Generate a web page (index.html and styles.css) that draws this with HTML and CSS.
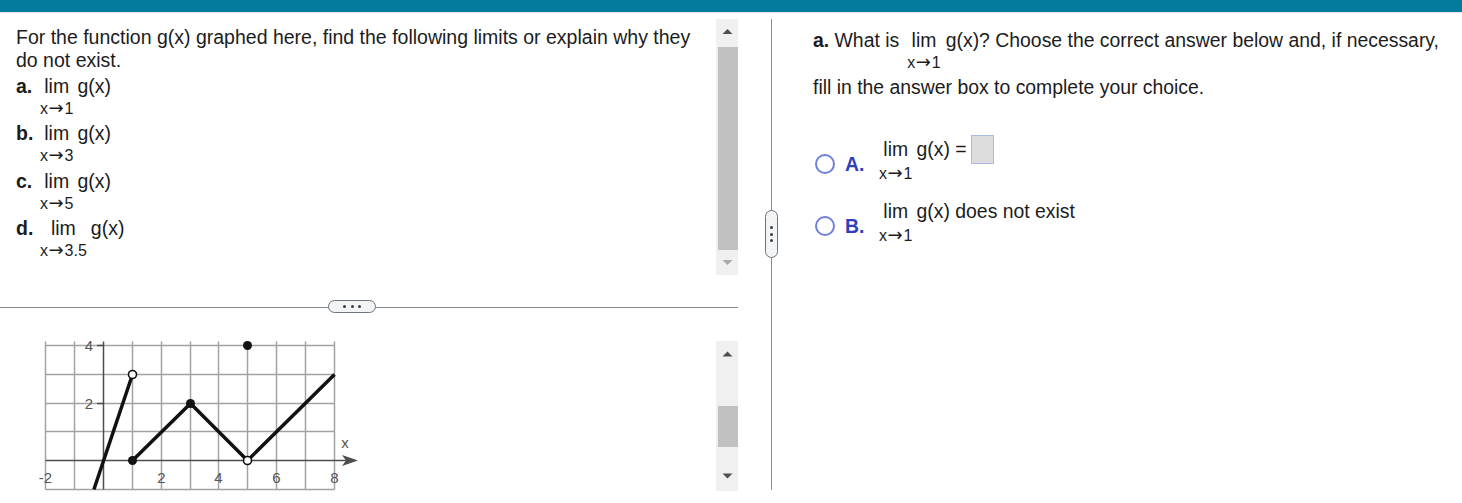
FILE: index.html
```html
<!DOCTYPE html>
<html lang="en">
<head>
<meta charset="utf-8">
<title>Limits from a graph</title>
<link rel="stylesheet" href="styles.css">
</head>
<body>
<div class="topbar"></div>
<div class="main">
  <div class="left">
    <div class="top-sec">
      <div class="question">
        <p class="intro">For the function g(x) graphed here, find the following limits or explain why they do not exist.</p>
        <div class="item"><b class="lbl">a.</b><span class="lim"><span class="lim-top">lim</span><span class="lim-sub">x<span class="arr">→</span>1</span></span><span class="fx">g(x)</span></div>
        <div class="item"><b class="lbl">b.</b><span class="lim"><span class="lim-top">lim</span><span class="lim-sub">x<span class="arr">→</span>3</span></span><span class="fx">g(x)</span></div>
        <div class="item"><b class="lbl">c.</b><span class="lim"><span class="lim-top">lim</span><span class="lim-sub">x<span class="arr">→</span>5</span></span><span class="fx">g(x)</span></div>
        <div class="item"><b class="lbl">d.</b><span class="lim"><span class="lim-top">lim</span><span class="lim-sub">x<span class="arr">→</span>3.5</span></span><span class="fx">g(x)</span></div>
      </div>
      <div class="scrollbar sb-tall">
        <svg class="sb-arrow" width="22" height="28" viewBox="0 0 22 28"><polygon points="6.5,15 11.5,10 16.5,15" fill="#505050"/></svg>
        <div class="sb-thumb thumb-tall"></div>
        <svg class="sb-arrow" width="22" height="25" viewBox="0 0 22 25"><polygon points="6.5,10 16.5,10 11.5,15" fill="#a8a8a8"/></svg>
      </div>
    </div>
    <div class="hsplit"><span class="hpill"><i></i><i></i><i></i></span></div>
    <div class="bottom-sec">
      <svg class="graph" width="420" height="162" viewBox="0 0 420 162">
        <g stroke="#a2a2a2" stroke-width="1.5" fill="none">
          <path d="M45.5,11.5V159.5M74.5,11.5V159.5M132.5,11.5V159.5M161.5,11.5V159.5M190.5,11.5V159.5M218.5,11.5V159.5M247.5,11.5V159.5M276.5,11.5V159.5M305.5,11.5V159.5M334.5,11.5V159.5"/>
          <path d="M45.5,15.5H334.5M45.5,44.5H334.5M45.5,73.5H334.5M45.5,101.5H334.5M45.5,159.5H334.5"/>
        </g>
        <g stroke="#4d4d4d" stroke-width="1.5" fill="none">
          <path d="M45.5,130.5H350"/>
          <path d="M103.5,11.5V159.5"/>
          <path d="M97,15.5H103.5M97,73.5H103.5"/>
        </g>
        <path d="M342,125 L358,130.5 L342,136 L346,130.5 Z" fill="#4d4d4d"/>
        <g class="ticks" font-size="15" fill="#555" text-anchor="middle">
          <text x="89" y="21">4</text>
          <text x="89" y="79">2</text>
          <text x="45.5" y="153">-2</text>
          <text x="161.5" y="153">2</text>
          <text x="218.5" y="153">4</text>
          <text x="276.5" y="153">6</text>
          <text x="334.5" y="153">8</text>
          <text x="345" y="118">x</text>
        </g>
        <g stroke="#111" stroke-width="3.5" fill="none">
          <path d="M93.9,159.5 L132.5,44.5"/>
          <path d="M132.5,130.5 L190.5,73.5 L247.5,130.5 L334.5,44.5"/>
        </g>
        <g fill="#111">
          <circle cx="132.5" cy="130.5" r="4.5"/>
          <circle cx="190.5" cy="73.5" r="4.5"/>
          <circle cx="247.5" cy="15.5" r="4.5"/>
        </g>
        <g fill="#fff" stroke="#111" stroke-width="1.6">
          <circle cx="132.5" cy="44.5" r="4"/>
          <circle cx="247.5" cy="130.5" r="4"/>
        </g>
      </svg>
      <div class="scrollbar sb-short">
        <svg class="sb-arrow" width="22" height="26" viewBox="0 0 22 26"><polygon points="6.5,15.5 11.5,10.5 16.5,15.5" fill="#505050"/></svg>
        <div class="sb-gap"></div>
        <div class="sb-thumb thumb-short"></div>
        <div class="sb-gap2"></div>
        <svg class="sb-arrow" width="22" height="26" viewBox="0 0 22 26"><polygon points="6.5,8.5 16.5,8.5 11.5,13.5" fill="#505050"/></svg>
      </div>
    </div>
  </div>
  <div class="vsplit"><span class="vpill"><i></i><i></i><i></i></span></div>
  <div class="right">
    <div class="prompt">
      <div class="prompt-line">
        <span class="pt"><b>a.</b> What is</span>
        <span class="lim"><span class="lim-top">lim</span><span class="lim-sub">x<span class="arr">→</span>1</span></span>
        <span class="pt">g(x)? Choose the correct answer below and, if necessary,</span>
      </div>
      <p class="pt2">fill in the answer box to complete your choice.</p>
    </div>
    <div class="options">
      <div class="opt">
        <span class="mark"><span class="radio"></span><b class="letter">A.</b></span>
        <span class="lim"><span class="lim-top">lim</span><span class="lim-sub">x<span class="arr">→</span>1</span></span>
        <span class="otext">g(x) = <span class="answer-box"></span></span>
      </div>
      <div class="opt">
        <span class="mark"><span class="radio"></span><b class="letter">B.</b></span>
        <span class="lim"><span class="lim-top">lim</span><span class="lim-sub">x<span class="arr">→</span>1</span></span>
        <span class="otext">g(x) does not exist</span>
      </div>
    </div>
  </div>
</div>
</body>
</html>
```
FILE: styles.css
```css
* { box-sizing: border-box; }
body {
  margin: 0;
  font-family: "Liberation Sans", Arial, sans-serif;
  color: #1c1c1c;
  background: #fff;
}
.topbar {
  height: 13px;
  background: #047a9c;
  border-bottom: 1px solid #dde7eb;
}
.main {
  display: flex;
  height: 490px;
}
.left {
  width: 738px;
  display: flex;
  flex-direction: column;
}
.top-sec {
  display: flex;
  margin-top: 6px;
  height: 256px;
}
.question {
  flex: 1;
  padding: 6.5px 0 0 16px;
  font-size: 19.5px;
  line-height: 23px;
}
.intro {
  margin: 0;
  width: 690px;
}
.item {
  display: flex;
  align-items: flex-start;
  margin-top: 3px;
}
.lbl {
  width: 24px;
}
.lim {
  display: inline-flex;
  flex-direction: column;
  align-items: center;
  vertical-align: top;
}
.lim-top {
  line-height: 23px;
}
.lim-sub {
  font-size: 16px;
  line-height: 21.5px;
  white-space: nowrap;
}
.arr {
  font-family: "DejaVu Sans", sans-serif;
  font-size: 18px;
  line-height: 1;
  margin: 0 1px 0 0.5px;
}
.fx {
  margin-left: 4px;
}
.scrollbar {
  width: 22px;
  background: #f0f0f0;
  display: flex;
  flex-direction: column;
}
.sb-arrow {
  display: block;
  flex: none;
}
.sb-thumb {
  margin-left: 2px;
  background: #c1c1c1;
}
.thumb-tall { height: 203px; }
.sb-gap { height: 39px; }
.thumb-short { height: 41px; }
.sb-gap2 { height: 18px; }
.hsplit {
  height: 55px;
  position: relative;
  display: flex;
  align-items: center;
  padding-left: 328px;
}
.hsplit::before {
  content: "";
  position: absolute;
  left: 0;
  right: 0;
  top: 31.5px;
  border-top: 1px solid #858a92;
}
.hpill {
  position: relative;
  margin-top: 8px;
  width: 48px;
  height: 13px;
  border: 1.5px solid #6b7280;
  border-radius: 7px;
  background: #f3f4f6;
  display: flex;
  justify-content: center;
  align-items: center;
  gap: 4.5px;
}
.hpill i, .vpill i {
  width: 3px;
  height: 3px;
  border-radius: 50%;
  background: #3a3d44;
}
.bottom-sec {
  display: flex;
  height: 162px;
}
.graph {
  display: block;
  width: 420px;
  height: 162px;
  font-family: "Liberation Sans", Arial, sans-serif;
}
.sb-short {
  margin-left: auto;
  margin-top: 11px;
  height: 150px;
}
.vsplit {
  width: 66px;
  position: relative;
  display: flex;
  justify-content: center;
  padding-top: 197px;
}
.vsplit::before {
  content: "";
  position: absolute;
  top: 6px;
  bottom: 13px;
  left: 32.5px;
  border-left: 1.5px solid #8a8d9a;
}
.vpill {
  position: relative;
  width: 13px;
  height: 48px;
  border: 1.5px solid #6b7280;
  border-radius: 7px;
  background: #f3f4f6;
  display: flex;
  flex-direction: column;
  align-items: center;
  justify-content: center;
  gap: 3.7px;
}
.right {
  flex: 1;
  padding: 15.5px 0 0 9px;
  font-size: 19.4px;
  line-height: 23px;
}
.prompt-line {
  display: flex;
  align-items: flex-start;
  white-space: nowrap;
}
.prompt-line .lim {
  margin: 0 5px 0 8px;
}
.prompt .lim-sub {
  line-height: 22px;
}
.pt2 {
  margin: 2px 0 0;
}
.options {
  margin-top: 39px;
  display: flex;
  flex-direction: column;
  gap: 14px;
}
.opt {
  display: flex;
  align-items: flex-start;
}
.opt .lim-sub {
  line-height: 25px;
}
.mark {
  display: flex;
  align-items: center;
  margin-top: 15px;
  width: 66px;
  padding-left: 2px;
}
.radio {
  width: 20px;
  height: 20px;
  border: 2px solid #6f80d9;
  border-radius: 50%;
  background: #fff;
  margin-right: 10px;
}
.letter {
  color: #2e3fb9;
}
.otext {
  margin-left: 4px;
  display: flex;
  align-items: center;
  height: 23px;
}
.answer-box {
  display: inline-block;
  width: 23px;
  height: 29px;
  margin-left: 4px;
  background: #dcdcdc;
  border: 1px solid #a9bbe8;
}
```
